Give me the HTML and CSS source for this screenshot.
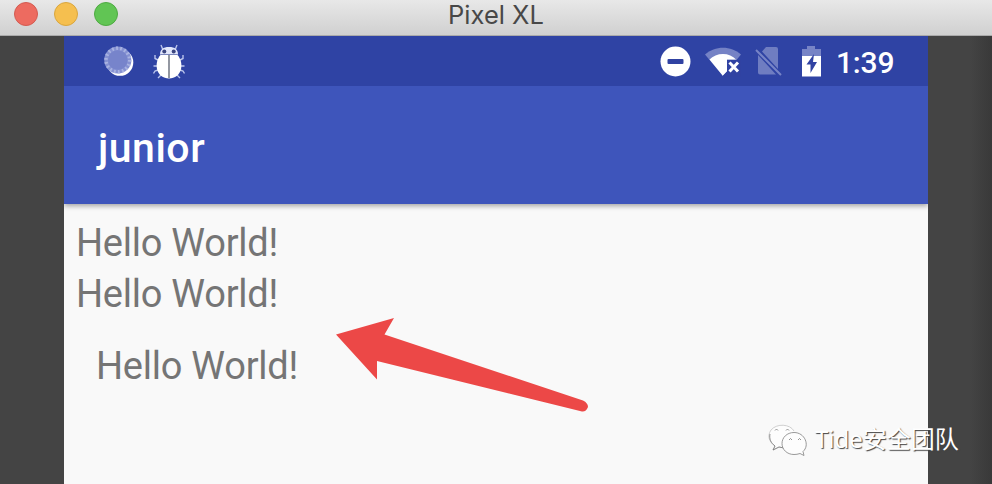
FILE: index.html
```html
<!DOCTYPE html>
<html lang="en">
<head>
<meta charset="utf-8">
<title>Pixel XL</title>
<link rel="stylesheet" href="styles.css">
</head>
<body>
<div class="window">
  <header class="titlebar">
    <div class="controls"><span class="dot close"></span><span class="dot minimize"></span><span class="dot maximize"></span></div>
    <h1 class="window-title">Pixel XL</h1>
  </header>
  <main class="desktop">
    <section class="phone">
      <div class="statusbar">
        <div class="notifications">
          <svg class="sync" width="30" height="30" viewBox="0 0 30 30">
            <circle cx="16" cy="16.500" r="13.300" fill="#fff"/>
            <circle cx="13.800" cy="14" r="13.600" fill="#8591d2"/>
            <circle cx="13.800" cy="14" r="11.800" fill="none" stroke="#a9b3e1" stroke-width="3.500" stroke-dasharray="1.800 2.320"/>
            <circle cx="13.800" cy="14" r="9.800" fill="#7784cb"/>
          </svg>
          <svg class="bug" width="32" height="36" viewBox="0 0 32 36">
            <g fill="none" stroke="#b9c3eb" stroke-width="1.400">
              <path d="M8 1l2 5M24 1l-2 5M5 16l-3-1.500V11M27 16l3-1.500V11M4 22H.5M28 22h3.500M5 26l-3 1-1.500 2.500M27 26l3 1 1.500 2.500M8 31l-3 3M24 31l3 3"/>
            </g>
            <path d="M7 10.500C7 5.500 10 3 16 3s9 2.500 9 7.500z" fill="#e2e7fb"/>
            <path d="M7.500 11h17C28 15 29 20 28 25c-1.500 6-6 9.500-12 9.500S5.500 31 4 25C3 20 4 15 7.500 11z" fill="#fff"/>
            <path d="M16 11v23" stroke="#59606f" stroke-width="1.300"/>
            <circle cx="11.300" cy="7.500" r="2" fill="#3b4680"/><circle cx="20.700" cy="7.500" r="2" fill="#3b4680"/>
            <path d="M8 10.500h16" stroke="#7784b9" stroke-width=".8"/>
          </svg>
        </div>
        <div class="system">
          <svg class="dnd" width="31" height="31" viewBox="0 0 31 31"><circle cx="15.500" cy="15.500" r="15" fill="#fff"/><rect x="7.500" y="13" width="16" height="5" rx="1" fill="#3042a2"/></svg>
          <svg class="wifi" width="36" height="30" viewBox="0 0 36 30">
            <path d="M0 7.500C10-1.500 26-1.500 36 7.500L31.500 13 18 29z" fill="#7582c5"/>
            <path d="M4.500 12.500C11 5 25 5 31 12.500h-9V24.500L18 29z" fill="#fff"/>
            <path d="M22 13h14v17H18V28.500l4-4z" fill="#3042a2"/>
            <path d="M24.500 15.500l8.500 9M33 15.500l-8.500 9" stroke="#fff" stroke-width="3"/>
          </svg>
          <svg class="nosim" width="27" height="30" viewBox="0 0 27 30">
            <path d="M11 1H21q2 0 2 2v20L7 5.500zM3 9l18 19.500H5q-2 0-2-2z" fill="#6f7dc1"/>
            <path d="M1 4l25 25" stroke="#7784c6" stroke-width="2"/>
          </svg>
          <svg class="battery" width="19" height="31" viewBox="0 0 19 31">
            <path d="M0 3h5V0h8v3h6v8H0z" fill="#7784c6"/><path d="M0 10h19v20.500H0z" fill="#fff"/>
            <path d="M12 8L4.500 18.500h4V27L15 16h-4z" fill="#3042a2"/>
          </svg>
          <span class="clock">1:39</span>
        </div>
      </div>
      <div class="appbar"><h2 class="app-title">junior</h2></div>
      <div class="content">
        <p class="label">Hello World!</p>
        <p class="label">Hello World!</p>
        <p class="label inset">Hello World!</p>
      </div>
    </section>
    <svg class="arrow" width="254" height="97" viewBox="0 0 254 97"><path d="M0 17.500L58 1 48.500 17.500 247 83.500Q252 86 252 90 250 95 246 94.500L41 44V62.500z" fill="#ec4847"/></svg>
    <div class="watermark">
      <svg class="chat" width="42" height="34" viewBox="0 0 42 34">
        <g fill="#fdfdfd" stroke-width=".8">
          <path d="M26 7C22 0 9-1 3 6c-4 6-2 12 4 16l-2 4 6-3 6 1" stroke="#c4c4c4"/>
          <path d="M2 10c-1 5 1 9 5 12l-2 4 6-3 5 1" fill="none" stroke="#777"/>
          <path d="M26 8.500c-7 0-12 5-12 11s5 11 12 11q3 0 6-1l4 2-1-4c7-6 2-19-9-19z" stroke="#808080"/>
          <path d="M7 6.500q1.500-3 3 0M18 6.500q1.500-3 3 0M21 16q1.500-3 3 0M30 16q1.500-3 3 0" stroke="#777"/>
        </g>
      </svg>
      <span class="watermark-text">Tide安全团队</span>
    </div>
  </main>
</div>
</body>
</html>
```

FILE: styles.css
```css
* { box-sizing: border-box; }
body { margin: 0; overflow: hidden; }
h1, h2, p { margin: 0; font-weight: 400; }
svg { display: block; flex: none; }
.window { width: 992px; height: 484px; display: flex; flex-direction: column; font-family: Roboto, sans-serif; }
.titlebar { height: 36px; flex: none; display: grid; grid-template-columns: 1fr auto 1fr; background: linear-gradient(#e8e8e8, #d0d0d0); border-bottom: 1px solid #aaa; }
.controls { display: flex; gap: 16px; padding: 2px 0 0 14px; }
.dot { width: 24px; height: 24px; border-radius: 50%; border: 1px solid; }
.close { background: #ed6b60; border-color: #d35b51; }
.minimize { background: #f5bf4f; border-color: #d9a63e; }
.maximize { background: #61c554; border-color: #4eaa42; }
.window-title { font: 400 25.5px/30px Inter, sans-serif; color: #484848; letter-spacing: 0; }
.desktop { position: relative; flex: 1; display: flex; justify-content: center; background: linear-gradient(90deg, #444 970px, #393939 992px); }
.phone { width: 864px; display: flex; flex-direction: column; background: #f9f9f9; }
.statusbar { height: 50px; flex: none; display: flex; justify-content: space-between; align-items: flex-start; padding: 8px 34px 0 40px; background: #2f43a4; }
.notifications, .system { display: flex; }
.sync { margin-top: 2px; }
.bug { margin-left: 19px; }
.dnd { margin-top: 2px; }
.wifi { margin: 3px 0 0 14px; }
.nosim { margin: 2px 0 0 14px; }
.battery { margin: 2px 0 0 20px; }
.clock { margin-left: 15px; width: 58px; white-space: nowrap; font-size: 30px; line-height: 37px; font-weight: 500; letter-spacing: -.2px; color: #fff; }
.appbar { height: 118px; flex: none; padding: 40px 0 0 34px; background: #3e55bb; box-shadow: 0 2px 5px rgba(0,0,0,.35); clip-path: inset(0 0 -10px 0); }
.app-title { font-size: 41px; line-height: 44px; font-weight: 500; letter-spacing: .5px; color: #fff; }
.content { padding: 14px 0 0 12px; }
.label { font-size: 38px; line-height: 51px; letter-spacing: -.25px; color: #757575; }
.inset { margin: 21px 0 0 20px; }
.arrow { position: absolute; left: 336px; top: 281px; }
.watermark { position: absolute; left: 768px; top: 386px; display: flex; gap: 5px; }
.chat { margin-top: 2px; }
.watermark-text { font: 24px/34px "Noto Sans", "Noto Sans CJK SC", sans-serif; color: #fff; text-shadow: 1px 1px 1px #444; white-space: nowrap; }
```
